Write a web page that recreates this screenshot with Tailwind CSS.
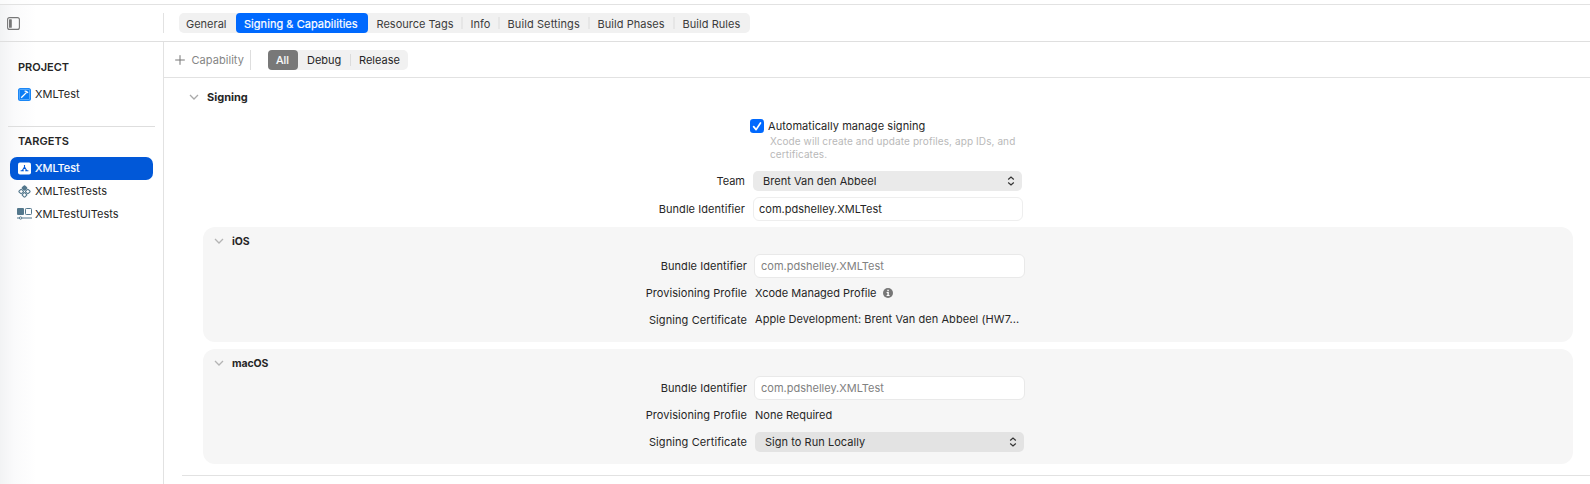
<!DOCTYPE html>
<html lang="en">
<head>
<meta charset="utf-8">
<title>Signing &amp; Capabilities</title>
<script src="https://cdn.jsdelivr.net/npm/@tailwindcss/browser@4"></script>
</head>
<body class="bg-white">
<div class="flex h-[484px] w-[1590px] flex-col overflow-hidden font-['Inter',sans-serif] text-[11px] leading-[14px] whitespace-nowrap text-[#262626] [&_svg]:shrink-0 bg-[linear-gradient(to_right,#f2f3f4_0,#fafafb_14px,#fff_36px)]">
  <div class="h-[5px] shrink-0 border-b border-[#e2e2e2] bg-white/60"></div>
  <header class="flex h-[37px] shrink-0 items-center border-b border-[#dfdfdf]">
    <div class="flex h-5 w-[164px] items-center border-r border-[#e2e2e2] pl-[7px]">
      <svg width="13" height="13" viewBox="0 0 13 13" fill="none"><rect x=".6" y=".6" width="11.8" height="11.8" rx="2" stroke="#777" stroke-width="1.1"/><rect x="2" y="2.2" width="2.8" height="8.6" rx=".6" fill="#777"/></svg>
    </div>
    <nav class="ml-[14.5px] flex h-5 w-[571px] items-center rounded-[5px] bg-[#f1f1f1] text-[#3c3c3c] [&_span]:block [&_span]:pt-px">
      <div class="w-[57.5px] pl-[7.5px]"><span>General</span></div>
      <div class="flex h-5 w-[132px] items-center rounded-[4px] bg-[#0069fe] pl-[8px] tracking-[0.05px] text-white [-webkit-text-stroke:0.2px_white]"><span>Signing &amp; Capabilities</span></div>
      <div class="w-[93px] pl-[8.5px]"><span>Resource Tags</span></div>
      <div class="h-3 w-[2px] bg-[#e6e6e6]"></div>
      <div class="w-[35px] pl-[7.5px]"><span>Info</span></div>
      <div class="h-3 w-[2px] bg-[#e6e6e6]"></div>
      <div class="w-[88px] pl-[7.5px] tracking-[0.1px]"><span>Build Settings</span></div>
      <div class="h-3 w-[2px] bg-[#e6e6e6]"></div>
      <div class="w-[83px] pl-[7.5px] tracking-[0.05px]"><span>Build Phases</span></div>
      <div class="h-3 w-[2px] bg-[#e6e6e6]"></div>
      <div class="pl-[7.5px] tracking-[0.05px]"><span>Build Rules</span></div>
    </nav>
  </header>
  <div class="flex min-h-0 flex-1">
    <aside class="w-[164px] shrink-0 border-r border-[#e2e2e2]">
      <h2 class="mt-[18px] pl-[18px] font-semibold">PROJECT</h2>
      <div class="mt-[9px] flex h-[22px] items-center gap-[4px] pl-[18px]">
        <svg width="13" height="13" viewBox="0 0 13 13" fill="none"><rect width="13" height="13" rx="2.5" fill="#0a7df5"/><rect x="1.3" y="1.3" width="10.4" height="10.4" rx="1.4" stroke="#7cc0ff" stroke-width=".8"/><path d="M3.2 9.8L8.6 4.4" stroke="#fff" stroke-width="1.3"/><path d="M6.6 3.3C8 2.8 9 3.4 10 5" stroke="#fff" stroke-width="1.3"/></svg>
        <span>XMLTest</span>
      </div>
      <div class="mt-[21px] ml-2 h-px w-[147px] bg-[#dedede]"></div>
      <h2 class="mt-[7px] pl-[18px] font-semibold">TARGETS</h2>
      <div class="mt-[9px] ml-[10px] flex h-[23px] w-[143px] items-center gap-[4px] rounded-[7px] bg-[#0158d8] pl-[8px] text-white [-webkit-text-stroke:0.2px_white]">
        <svg class="-mt-px" width="13" height="13" viewBox="0 0 13 13" fill="none"><rect y=".5" width="13" height="12" rx="2" fill="#fff"/><path d="M6.5 3L6.5 5.2M6.5 5L4.2 8.8M6.5 5L8.8 8.8M2.6 8.8h3.2M7.2 8.8h3.2" stroke="#0158d8" stroke-width="1.1"/></svg>
        <span class="-mt-px">XMLTest</span>
      </div>
      <div class="-mt-px flex h-[23px] items-center gap-[4px] pl-[18px]">
        <svg class="mt-px" width="13" height="13" viewBox="0 0 13 13" fill="none" stroke="#53778c" stroke-width="1.1"><rect x="4.7" y="1.2" width="3.6" height="3.6" rx=".8" transform="rotate(45 6.5 3)" fill="#53778c"/><rect x="1.4" y="4.7" width="3.6" height="3.6" rx=".8" transform="rotate(45 3.2 6.5)"/><rect x="8" y="4.7" width="3.6" height="3.6" rx=".8" transform="rotate(45 9.8 6.5)"/><rect x="4.7" y="8.1" width="3.6" height="3.6" rx=".8" transform="rotate(45 6.5 9.9)"/></svg>
        <span>XMLTestTests</span>
      </div>
      <div class="flex h-[23px] items-center gap-[3px] pl-[17px]">
        <svg width="15" height="12" viewBox="0 0 15 12" fill="none" stroke="#53778c"><rect x="0" y="0" width="7" height="7" rx="1" fill="#53778c" stroke="none"/><rect x="8.5" y=".5" width="6" height="6" rx=".8"/><path d="M0 10h2.2M5 10h10"/><circle cx="3.6" cy="10" r="1.2"/></svg>
        <span>XMLTestUITests</span>
      </div>
    </aside>
    <main class="flex min-w-0 flex-1 flex-col bg-white">
      <div class="flex h-9 shrink-0 items-center border-b border-[#e2e2e2]">
        <div class="flex h-5 w-[87px] items-center gap-[6.5px] border-r border-[#dedede] pl-[11px] tracking-[0.05px] text-[#858585]">
          <svg width="10" height="10" viewBox="0 0 10 10" stroke="#777" stroke-width="1"><path d="M5 .2v9.6M.2 5h9.6"/></svg>
          <span>Capability</span>
        </div>
        <div class="ml-[17px] flex h-5 w-[140px] items-center rounded-[5px] bg-[#f1f1f1]">
          <div class="flex h-5 w-[30px] items-center rounded-[4px] bg-[#787878] pl-[8px] text-white [-webkit-text-stroke:0.2px_white]"><span>All</span></div>
          <div class="w-[52px] pl-[9px]"><span>Debug</span></div>
          <div class="h-3 w-px bg-[#dcdcdc]"></div>
          <div class="pl-[8px]"><span>Release</span></div>
        </div>
      </div>
      <div class="mt-[12px] flex h-[14px] items-center gap-[8.5px] pl-[24.5px] font-bold">
        <svg width="10" height="6" viewBox="0 0 10 6" fill="none" stroke="#aaa" stroke-width="1.3"><path d="M1 1l4 4 4-4"/></svg>
        <h1>Signing</h1>
      </div>
      <div class="mt-[15px] flex h-[14px] items-center gap-[4px] pl-[586px]">
        <svg width="14" height="14" viewBox="0 0 14 14" fill="none"><rect width="14" height="14" rx="3.2" fill="#0069fe"/><path d="M3.6 7.6l2.5 3L10.5 4" stroke="#fff" stroke-width="1.7" stroke-linecap="round" stroke-linejoin="round"/></svg>
        <span class="tracking-[0.05px]">Automatically manage signing</span>
      </div>
      <p class="mt-[2px] pl-[606px] text-[10px] leading-[13px] tracking-[0.1px] text-[#b9b9b9]">Xcode will create and update profiles, app IDs, and<br>certificates.</p>
      <div class="mt-[10px] flex h-5 items-center gap-[8px]">
        <div class="w-[581px] text-right">Team</div>
        <div class="flex h-5 w-[269px] items-center justify-between rounded-[5px] bg-[#eaeaea] pr-[7px] pl-[10px] tracking-[0.03px]"><span>Brent Van den Abbeel</span>
          <svg width="8" height="10" viewBox="0 0 8 10" fill="none" stroke="#333" stroke-width="1.2"><path d="M1.2 3.5L4 1l2.8 2.5M1.2 6.5L4 9l2.8-2.5"/></svg></div>
      </div>
      <div class="mt-[6px] flex h-6 items-center gap-[8px]">
        <div class="w-[581px] text-right tracking-[0.06px]">Bundle Identifier</div>
        <div class="flex h-6 w-[270px] items-center rounded-[6px] border border-[#eee] bg-white pl-[5px]">com.pdshelley.XMLTest</div>
      </div>
      <section class="mt-[6px] ml-[39px] h-[115px] w-[1370px] shrink-0 rounded-[12px] bg-[#f6f6f6]">
        <div class="flex h-[28px] items-center gap-[8px] pl-[11px] font-bold"><svg width="10" height="6" viewBox="0 0 10 6" fill="none" stroke="#b4b4b4" stroke-width="1.3"><path d="M1 1l4 4 4-4"/></svg><h2 class="pt-px text-[10.5px] tracking-[-0.1px]">iOS</h2></div>
        <div class="-mt-px flex h-6 items-center gap-[7px]">
          <div class="w-[544px] text-right tracking-[0.06px]">Bundle Identifier</div>
          <div class="flex h-6 w-[271px] items-center rounded-[6px] border border-[#e9e9e9] bg-white pl-[6px] text-[#818181]">com.pdshelley.XMLTest</div>
        </div>
        <div class="mt-[8px] flex h-[14px] items-center gap-[8px]">
          <div class="w-[544px] text-right tracking-[0.06px]">Provisioning Profile</div>
          <div class="flex items-center gap-[7px]"><span>Xcode Managed Profile</span>
          <svg width="10" height="10" viewBox="0 0 10 10"><circle cx="5" cy="5" r="5" fill="#777"/><path d="M4.3 1.8h1.5v1.4H4.3zM3.6 4h2.2v3h.8v.9h-3V7h.8V4.9h-.8z" fill="#fff"/></svg></div>
        </div>
        <div class="mt-[13px] flex h-[14px] items-center gap-[8px]">
          <div class="w-[544px] text-right tracking-[0.1px]">Signing Certificate</div>
          <div class="pb-[2px] tracking-[0.06px]">Apple Development: Brent Van den Abbeel (HW7...</div>
        </div>
      </section>
      <section class="mt-[7px] ml-[39px] h-[115px] w-[1370px] shrink-0 rounded-[12px] bg-[#f6f6f6]">
        <div class="flex h-[28px] items-center gap-[8px] pl-[11px] font-bold"><svg width="10" height="6" viewBox="0 0 10 6" fill="none" stroke="#b4b4b4" stroke-width="1.3"><path d="M1 1l4 4 4-4"/></svg><h2 class="pt-px text-[10.5px] tracking-[-0.1px]">macOS</h2></div>
        <div class="-mt-px flex h-6 items-center gap-[7px]">
          <div class="w-[544px] text-right tracking-[0.06px]">Bundle Identifier</div>
          <div class="flex h-6 w-[271px] items-center rounded-[6px] border border-[#e9e9e9] bg-white pl-[6px] text-[#818181]">com.pdshelley.XMLTest</div>
        </div>
        <div class="mt-[8px] flex h-[14px] items-center gap-[8px]">
          <div class="w-[544px] text-right tracking-[0.06px]">Provisioning Profile</div>
          <span>None Required</span>
        </div>
        <div class="mt-[10px] flex h-5 items-center gap-[8px]">
          <div class="w-[544px] text-right tracking-[0.1px]">Signing Certificate</div>
          <div class="flex h-5 w-[269px] items-center justify-between rounded-[5px] bg-[#e3e3e3] pr-[7px] pl-[10px] tracking-[0.04px]"><span>Sign to Run Locally</span>
          <svg width="8" height="10" viewBox="0 0 8 10" fill="none" stroke="#333" stroke-width="1.2"><path d="M1.2 3.5L4 1l2.8 2.5M1.2 6.5L4 9l2.8-2.5"/></svg></div>
        </div>
      </section>
      <div class="mt-[11px] ml-[18px] h-px shrink-0 bg-[#e2e2e2]"></div>
    </main>
  </div>
</div>
</body>
</html>
